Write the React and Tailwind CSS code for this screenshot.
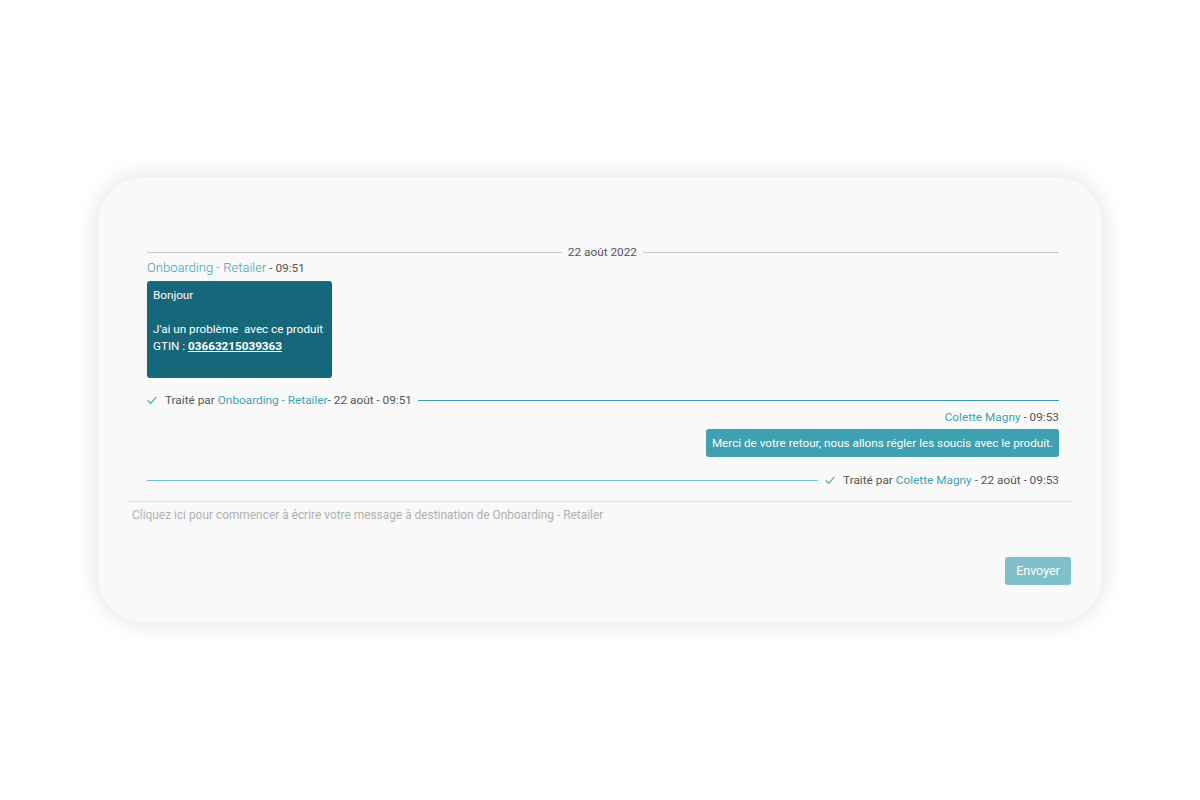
import React from "react";

function Check() {
  return (
    <svg width="10" height="9" viewBox="0 0 10 9" className="shrink-0">
      <path d="M1 4.8 L3.7 7.4 L9 1.4" fill="none" stroke="#4db380" strokeWidth="1.2" strokeLinecap="round" strokeLinejoin="round" />
    </svg>
  );
}

const teal = "text-[#3ea3b4]";

export default function App() {
  return (
    <div className="w-full h-[800px] bg-white pt-[177px] pl-[98px]" style={{ fontFamily: "Roboto, 'Noto Sans', sans-serif" }}>
      <div className="w-[1004px] h-[445px] rounded-[46px] bg-[#f9f9f9] shadow-[0_0_24px_rgba(0,0,0,0.13)] flex flex-col">
        <div className="pl-[49px] pr-[43px] pt-[67px] flex flex-col text-[11.8px] leading-[17px]">
          {/* date divider */}
          <div className="flex items-center h-[17px]">
            <div className="flex-1 h-px bg-[#c8c8c8]" />
            <span className="px-[6px] text-[#555]">22 août 2022</span>
            <div className="w-[416px] h-px bg-[#c8c8c8]" />
          </div>
          {/* sender */}
          <div className="mt-[-2px] h-[17px]">
            <span className="text-[13px] font-light text-[#3ea3b4]">Onboarding - Retailer</span>
            <span className="text-[#555]"> - 09:51</span>
          </div>
          {/* bubble 1 */}
          <div className="mt-[5px] w-[185px] h-[97px] rounded-[3px] bg-[#17677b] text-white text-[11.7px] px-[6px] py-[6px] whitespace-nowrap">
            <div>Bonjour</div>
            <div>&nbsp;</div>
            <div>J'ai un problème &nbsp;avec ce produit</div>
            <div>
              GTIN : <span className="underline font-bold">03663215039363</span>
            </div>
          </div>
          {/* traité 1 */}
          <div className="mt-[14px] flex items-center h-[17px]">
            <Check />
            <span className="ml-[8px] text-[#555]">Traité par</span>
            <span className={"ml-[3px] " + teal}>Onboarding - Retailer</span>
            <span className="text-[#555]">- 22 août - 09:51</span>
            <div className="ml-[6px] flex-1 h-px bg-[#3f9bb0]" />
          </div>
          {/* sender 2 */}
          <div className="h-[17px] text-right">
            <span className={teal}>Colette Magny</span>
            <span className="text-[#555]"> - 09:53</span>
          </div>
          {/* bubble 2 */}
          <div className="mt-[3px] self-end h-[28px] rounded-[3px] bg-[#3ea0b0] text-white text-[11.7px] px-[6px] flex items-center">
            Merci de votre retour, nous allons régler les soucis avec le produit.
          </div>
          {/* traité 2 */}
          <div className="mt-[15px] flex items-center h-[17px]">
            <div className="flex-1 h-px bg-[#72bfcd]" />
            <span className="ml-[7px]"><Check /></span>
            <span className="ml-[8px] text-[#555]">Traité par</span>
            <span className={"ml-[3px] " + teal}>Colette Magny</span>
            <span className="text-[#555]">&nbsp;- 22 août - 09:53</span>
          </div>
        </div>
        {/* input area */}
        <div className="mt-[12px] ml-[29px] mr-[31px] border-t border-[#e2e2e2] pt-[5px]">
          <div className="pl-[5px] text-[11.9px] leading-[17px] text-[#b0b0b0]">
            Cliquez ici pour commencer à écrire votre message à destination de Onboarding - Retailer
          </div>
          <div className="mt-[33px] flex justify-end">
            <button className="w-[66px] h-[28px] rounded-[3px] bg-[#80c0ca] text-white text-[12.5px]">Envoyer</button>
          </div>
        </div>
      </div>
    </div>
  );
}
